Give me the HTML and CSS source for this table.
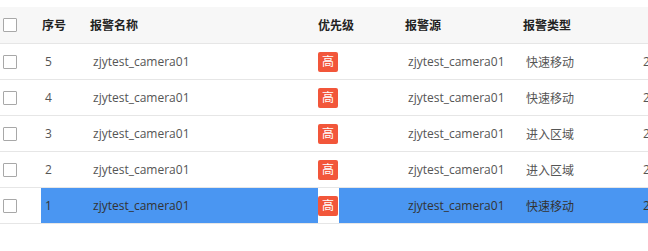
FILE: index.html
```html
<!DOCTYPE html>
<html lang="zh">
<head>
<meta charset="utf-8">
<link rel="stylesheet" href="styles.css">
</head>
<body>
<div class="table">
  <div class="row head">
    <div class="cell chk"><span class="box"></span></div>
    <div class="cell">序号</div>
    <div class="cell">报警名称</div>
    <div class="cell">优先级</div>
    <div class="cell">报警源</div>
    <div class="cell">报警类型</div>
    <div class="cell last"></div>
  </div>
  <div class="row">
    <div class="cell chk"><span class="box"></span></div>
    <div class="cell">5</div>
    <div class="cell">zjytest_camera01</div>
    <div class="cell pri"><span class="badge">高</span></div>
    <div class="cell">zjytest_camera01</div>
    <div class="cell">快速移动</div>
    <div class="cell last">2020-05-12 10:23:45</div>
  </div>
  <div class="row">
    <div class="cell chk"><span class="box"></span></div>
    <div class="cell">4</div>
    <div class="cell">zjytest_camera01</div>
    <div class="cell pri"><span class="badge">高</span></div>
    <div class="cell">zjytest_camera01</div>
    <div class="cell">快速移动</div>
    <div class="cell last">2020-05-12 10:23:40</div>
  </div>
  <div class="row">
    <div class="cell chk"><span class="box"></span></div>
    <div class="cell">3</div>
    <div class="cell">zjytest_camera01</div>
    <div class="cell pri"><span class="badge">高</span></div>
    <div class="cell">zjytest_camera01</div>
    <div class="cell">进入区域</div>
    <div class="cell last">2020-05-12 10:23:31</div>
  </div>
  <div class="row">
    <div class="cell chk"><span class="box"></span></div>
    <div class="cell">2</div>
    <div class="cell">zjytest_camera01</div>
    <div class="cell pri"><span class="badge">高</span></div>
    <div class="cell">zjytest_camera01</div>
    <div class="cell">进入区域</div>
    <div class="cell last">2020-05-12 10:23:22</div>
  </div>
  <div class="row selected">
    <div class="cell chk"><span class="box"></span></div>
    <div class="cell">1</div>
    <div class="cell">zjytest_camera01</div>
    <div class="cell pri"><span class="badge">高</span></div>
    <div class="cell">zjytest_camera01</div>
    <div class="cell">快速移动</div>
    <div class="cell last">2020-05-12 10:23:10</div>
  </div>
</div>
</body>
</html>
```
FILE: styles.css
```css
html, body {
  margin: 0;
  padding: 0;
  background: #fff;
  overflow: hidden;
}
body {
  font-family: "Open Sans", "Noto Sans CJK SC", sans-serif;
  font-size: 12px;
  color: #555;
}
.table {
  padding-top: 7px;
  width: 720px;
}
.row {
  display: grid;
  grid-template-columns: 41px 48px 228px 87px 118px 120px 78px;
  height: 36px;
  border-bottom: 1px solid #e6e6e6;
  box-sizing: border-box;
}
.row.head {
  background: #f7f7f7;
  color: #222;
  font-weight: bold;
  height: 37px;
}
.cell {
  display: flex;
  align-items: center;
  padding-left: 4px;
  white-space: nowrap;
  overflow: hidden;
}
.head .cell {
  padding-left: 1px;
}
.cell.chk {
  padding-left: 3px;
  background: #fff;
}
.head .cell.chk {
  background: transparent;
}
.box {
  width: 14px;
  height: 14px;
  box-sizing: border-box;
  border: 1px solid #a8a8a8;
  border-radius: 1px;
  background: #fff;
}
.cell.pri {
  padding-left: 1px;
}
.cell.last {
  padding-left: 1px;
}
.badge {
  display: inline-flex;
  align-items: center;
  justify-content: center;
  width: 20px;
  height: 20px;
  background: #f2563a;
  color: #fff;
  border-radius: 2px;
  font-size: 12px;
  line-height: 1;
}
.selected .cell {
  background: #4a96f2;
  color: #333;
}
.selected .cell.chk {
  background: #fff;
}
.selected .cell.pri {
  background: linear-gradient(to right, #4a96f2 1px, #fff 1px, #fff 22px, #4a96f2 22px);
}
```
